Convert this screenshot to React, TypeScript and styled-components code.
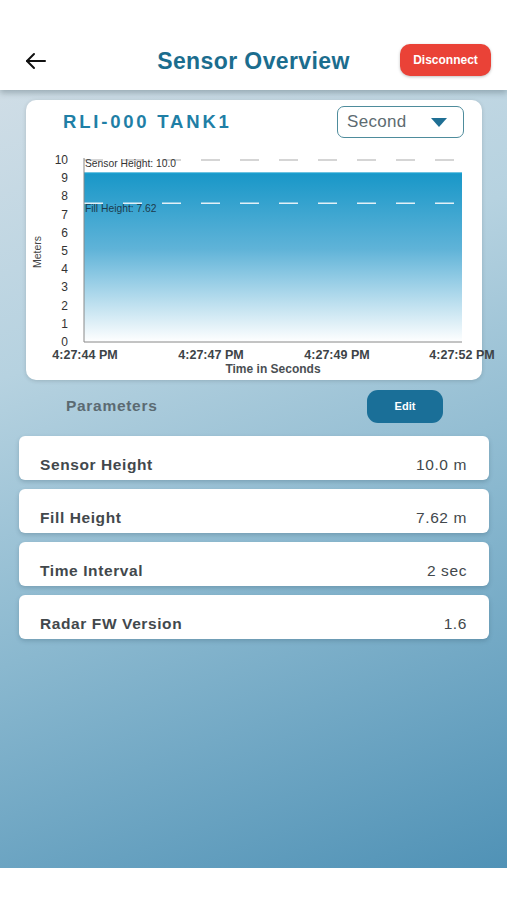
import React from "react";
import styled, { createGlobalStyle } from "styled-components";

const Global = createGlobalStyle`
  html, body { margin: 0; padding: 0; background: #fff; }
  body { font-family: "Liberation Sans", Arial, sans-serif; }
  * { box-sizing: border-box; }
`;

const FONT = '"Liberation Sans", Arial, sans-serif';

const Page = styled.div`
  width: 507px;
  height: 900px;
  display: flex;
  flex-direction: column;
  background: #fff;
  overflow: hidden;
`;

const Header = styled.header`
  height: 90px;
  flex: none;
  display: grid;
  grid-template-columns: 1fr auto 1fr;
  align-items: center;
  padding: 32px 16px 0 24px;
  background: #fff;
  position: relative;
  z-index: 2;
  box-shadow: 0 3px 6px rgba(60, 80, 90, 0.35);
`;

const BackBtn = styled.div`
  display: flex;
  align-items: center;
  justify-self: start;
`;

const Title = styled.h1`
  margin: 0;
  font-size: 23px;
  font-weight: 700;
  color: #1b6d8e;
  letter-spacing: 0.4px;
  padding-right: 8px;
`;

const Disconnect = styled.button`
  justify-self: end;
  width: 91px;
  height: 32px;
  border: none;
  border-radius: 10px;
  background: #ea4237;
  color: #fff;
  font-family: inherit;
  font-size: 12px;
  font-weight: 700;
  box-shadow: 0 1px 3px rgba(0,0,0,0.25);
  margin-bottom: 2px;
`;

const Body = styled.main`
  flex: 1;
  background: linear-gradient(160deg, #cfdde6 0%, #b6d2e0 30%, #8ab8cf 60%, #5092b6 100%);
  padding: 10px 18px 0 19px;
  display: flex;
  flex-direction: column;
`;

const ChartCard = styled.section`
  margin: 0 7px 0 7px;
  height: 280px;
  background: #fff;
  border-radius: 10px;
  box-shadow: 0 1px 4px rgba(0,0,0,0.15);
  display: flex;
  flex-direction: column;
  padding: 6px 18px 0 37px;
`;

const CardTop = styled.div`
  display: flex;
  justify-content: space-between;
  align-items: center;
  height: 32px;
`;

const TankName = styled.h2`
  margin: 0;
  font-size: 18.5px;
  font-weight: 700;
  letter-spacing: 2.8px;
  color: #1f7fa6;
`;

const Select = styled.div`
  width: 127px;
  height: 32px;
  border: 1.5px solid #4e8c9c;
  border-radius: 7px;
  display: flex;
  align-items: center;
  justify-content: space-between;
  padding: 0 16px 0 9px;
  font-size: 17px;
  letter-spacing: 0.3px;
  color: #5d6b71;
`;

const ChartWrap = styled.div`
  margin-left: -37px;
  margin-right: -18px;
  flex: 1;
  svg { overflow: visible; }
`;

const ParamsBar = styled.div`
  display: flex;
  align-items: center;
  justify-content: space-between;
  padding: 0 46px 0 47px;
  height: 52px;
`;

const ParamsLabel = styled.span`
  font-size: 15.5px;
  font-weight: 700;
  letter-spacing: 0.7px;
  color: #5b6a72;
`;

const EditBtn = styled.button`
  width: 76px;
  height: 33px;
  border: none;
  border-radius: 11px;
  background: #1a6f98;
  color: #fff;
  font-family: inherit;
  font-size: 11px;
  font-weight: 700;
`;

const Rows = styled.div`
  display: flex;
  flex-direction: column;
  gap: 9px;
  margin-top: 4px;
`;

const Row = styled.div`
  height: 44px;
  background: #fff;
  border-radius: 6px;
  box-shadow: 0 2px 4px rgba(40, 70, 90, 0.25);
  display: flex;
  justify-content: space-between;
  align-items: flex-end;
  padding: 0 22px 6px 21px;
  font-size: 15.5px;
  letter-spacing: 0.6px;
  color: #42484c;
`;

const RowLabel = styled.span`
  font-weight: 700;
`;

const RowValue = styled.span`
  font-weight: 400;
`;

const Footer = styled.footer`
  height: 32px;
  flex: none;
  background: #fff;
`;

const Chart: React.FC = () => {
  const x0 = 84, x1 = 462, yTop = 160, yBot = 342;
  const unit = (yBot - yTop) / 10;
  const y = (v: number) => yBot - v * unit;
  const fillTop = y(9.3);
  const xs = [85, 211, 337, 462];
  const times = ["4:27:44 PM", "4:27:47 PM", "4:27:49 PM", "4:27:52 PM"];
  const ox = 26, oy = 138;
  return (
    <svg width="456" height="242" viewBox={`${ox} ${oy} 456 242`} style={{ display: "block" }}>
      <defs>
        <linearGradient id="fillg" x1="0" y1="0" x2="0" y2="1">
          <stop offset="0" stopColor="#1897c8" />
          <stop offset="0.45" stopColor="#5fb3d8" />
          <stop offset="1" stopColor="#ffffff" />
        </linearGradient>
      </defs>
      <rect x={x0} y={fillTop} width={x1 - x0} height={yBot - fillTop} fill="url(#fillg)" />
      <line x1={x0} y1={fillTop + 0.5} x2={x1} y2={fillTop + 0.5} stroke="#1aa0d0" strokeWidth="1.5" />
      <line x1={x0} y1={y(10)} x2={x1} y2={y(10)} stroke="#c8c8c8" strokeWidth="1.5" strokeDasharray="19 20" />
      <line x1={x0} y1={y(7.62)} x2={x1} y2={y(7.62)} stroke="#e2f0f7" strokeWidth="1.5" strokeDasharray="19 20" />
      <line x1={x0} y1={yTop - 2} x2={x0} y2={yBot} stroke="#888" strokeWidth="1" />
      <line x1={x0} y1={yBot} x2={x1} y2={yBot} stroke="#888" strokeWidth="1" />
      {Array.from({ length: 11 }).map((_, i) => (
        <text key={i} x={68} y={y(i) + 4} textAnchor="end" fontSize="12" fill="#333" fontFamily={FONT}>{i}</text>
      ))}
      <text x={85} y={167} fontSize="10.3" fill="#333" fontFamily={FONT}>Sensor Height: 10.0</text>
      <text x={85} y={212} fontSize="10.3" fill="#1c3b4c" fontFamily={FONT}>Fill Height: 7.62</text>
      <text x={41} y={252} fontSize="10.5" fill="#444" textAnchor="middle" transform="rotate(-90 41 252)" fontFamily={FONT}>Meters</text>
      {xs.map((xx, i) => (
        <text key={i} x={xx} y={359} fontSize="12.5" fontWeight="700" fill="#3d4347" textAnchor="middle" fontFamily={FONT}>{times[i]}</text>
      ))}
      <text x={273} y={373} fontSize="12" fontWeight="700" fill="#4a4f53" textAnchor="middle" fontFamily={FONT}>Time in Seconds</text>
    </svg>
  );
};

const params = [
  ["Sensor Height", "10.0 m"],
  ["Fill Height", "7.62 m"],
  ["Time Interval", "2 sec"],
  ["Radar FW Version", "1.6"],
];

export default function App() {
  return (
    <Page>
      <Global />
      <Header>
        <BackBtn>
          <svg width="24" height="24" viewBox="0 0 24 24" fill="none" stroke="#111" strokeWidth="2" strokeLinecap="round" strokeLinejoin="round">
            <path d="M21 12H3" />
            <path d="M10 5l-7 7 7 7" />
          </svg>
        </BackBtn>
        <Title>Sensor Overview</Title>
        <Disconnect>Disconnect</Disconnect>
      </Header>
      <Body>
        <ChartCard>
          <CardTop>
            <TankName>RLI-000 TANK1</TankName>
            <Select>
              <span>Second</span>
              <svg width="16" height="9" viewBox="0 0 16 9">
                <path d="M0 0 L16 0 L8 9 Z" fill="#1f6f94" />
              </svg>
            </Select>
          </CardTop>
          <ChartWrap>
            <Chart />
          </ChartWrap>
        </ChartCard>
        <ParamsBar>
          <ParamsLabel>Parameters</ParamsLabel>
          <EditBtn>Edit</EditBtn>
        </ParamsBar>
        <Rows>
          {params.map(([k, v]) => (
            <Row key={k}>
              <RowLabel>{k}</RowLabel>
              <RowValue>{v}</RowValue>
            </Row>
          ))}
        </Rows>
      </Body>
      <Footer />
    </Page>
  );
}
